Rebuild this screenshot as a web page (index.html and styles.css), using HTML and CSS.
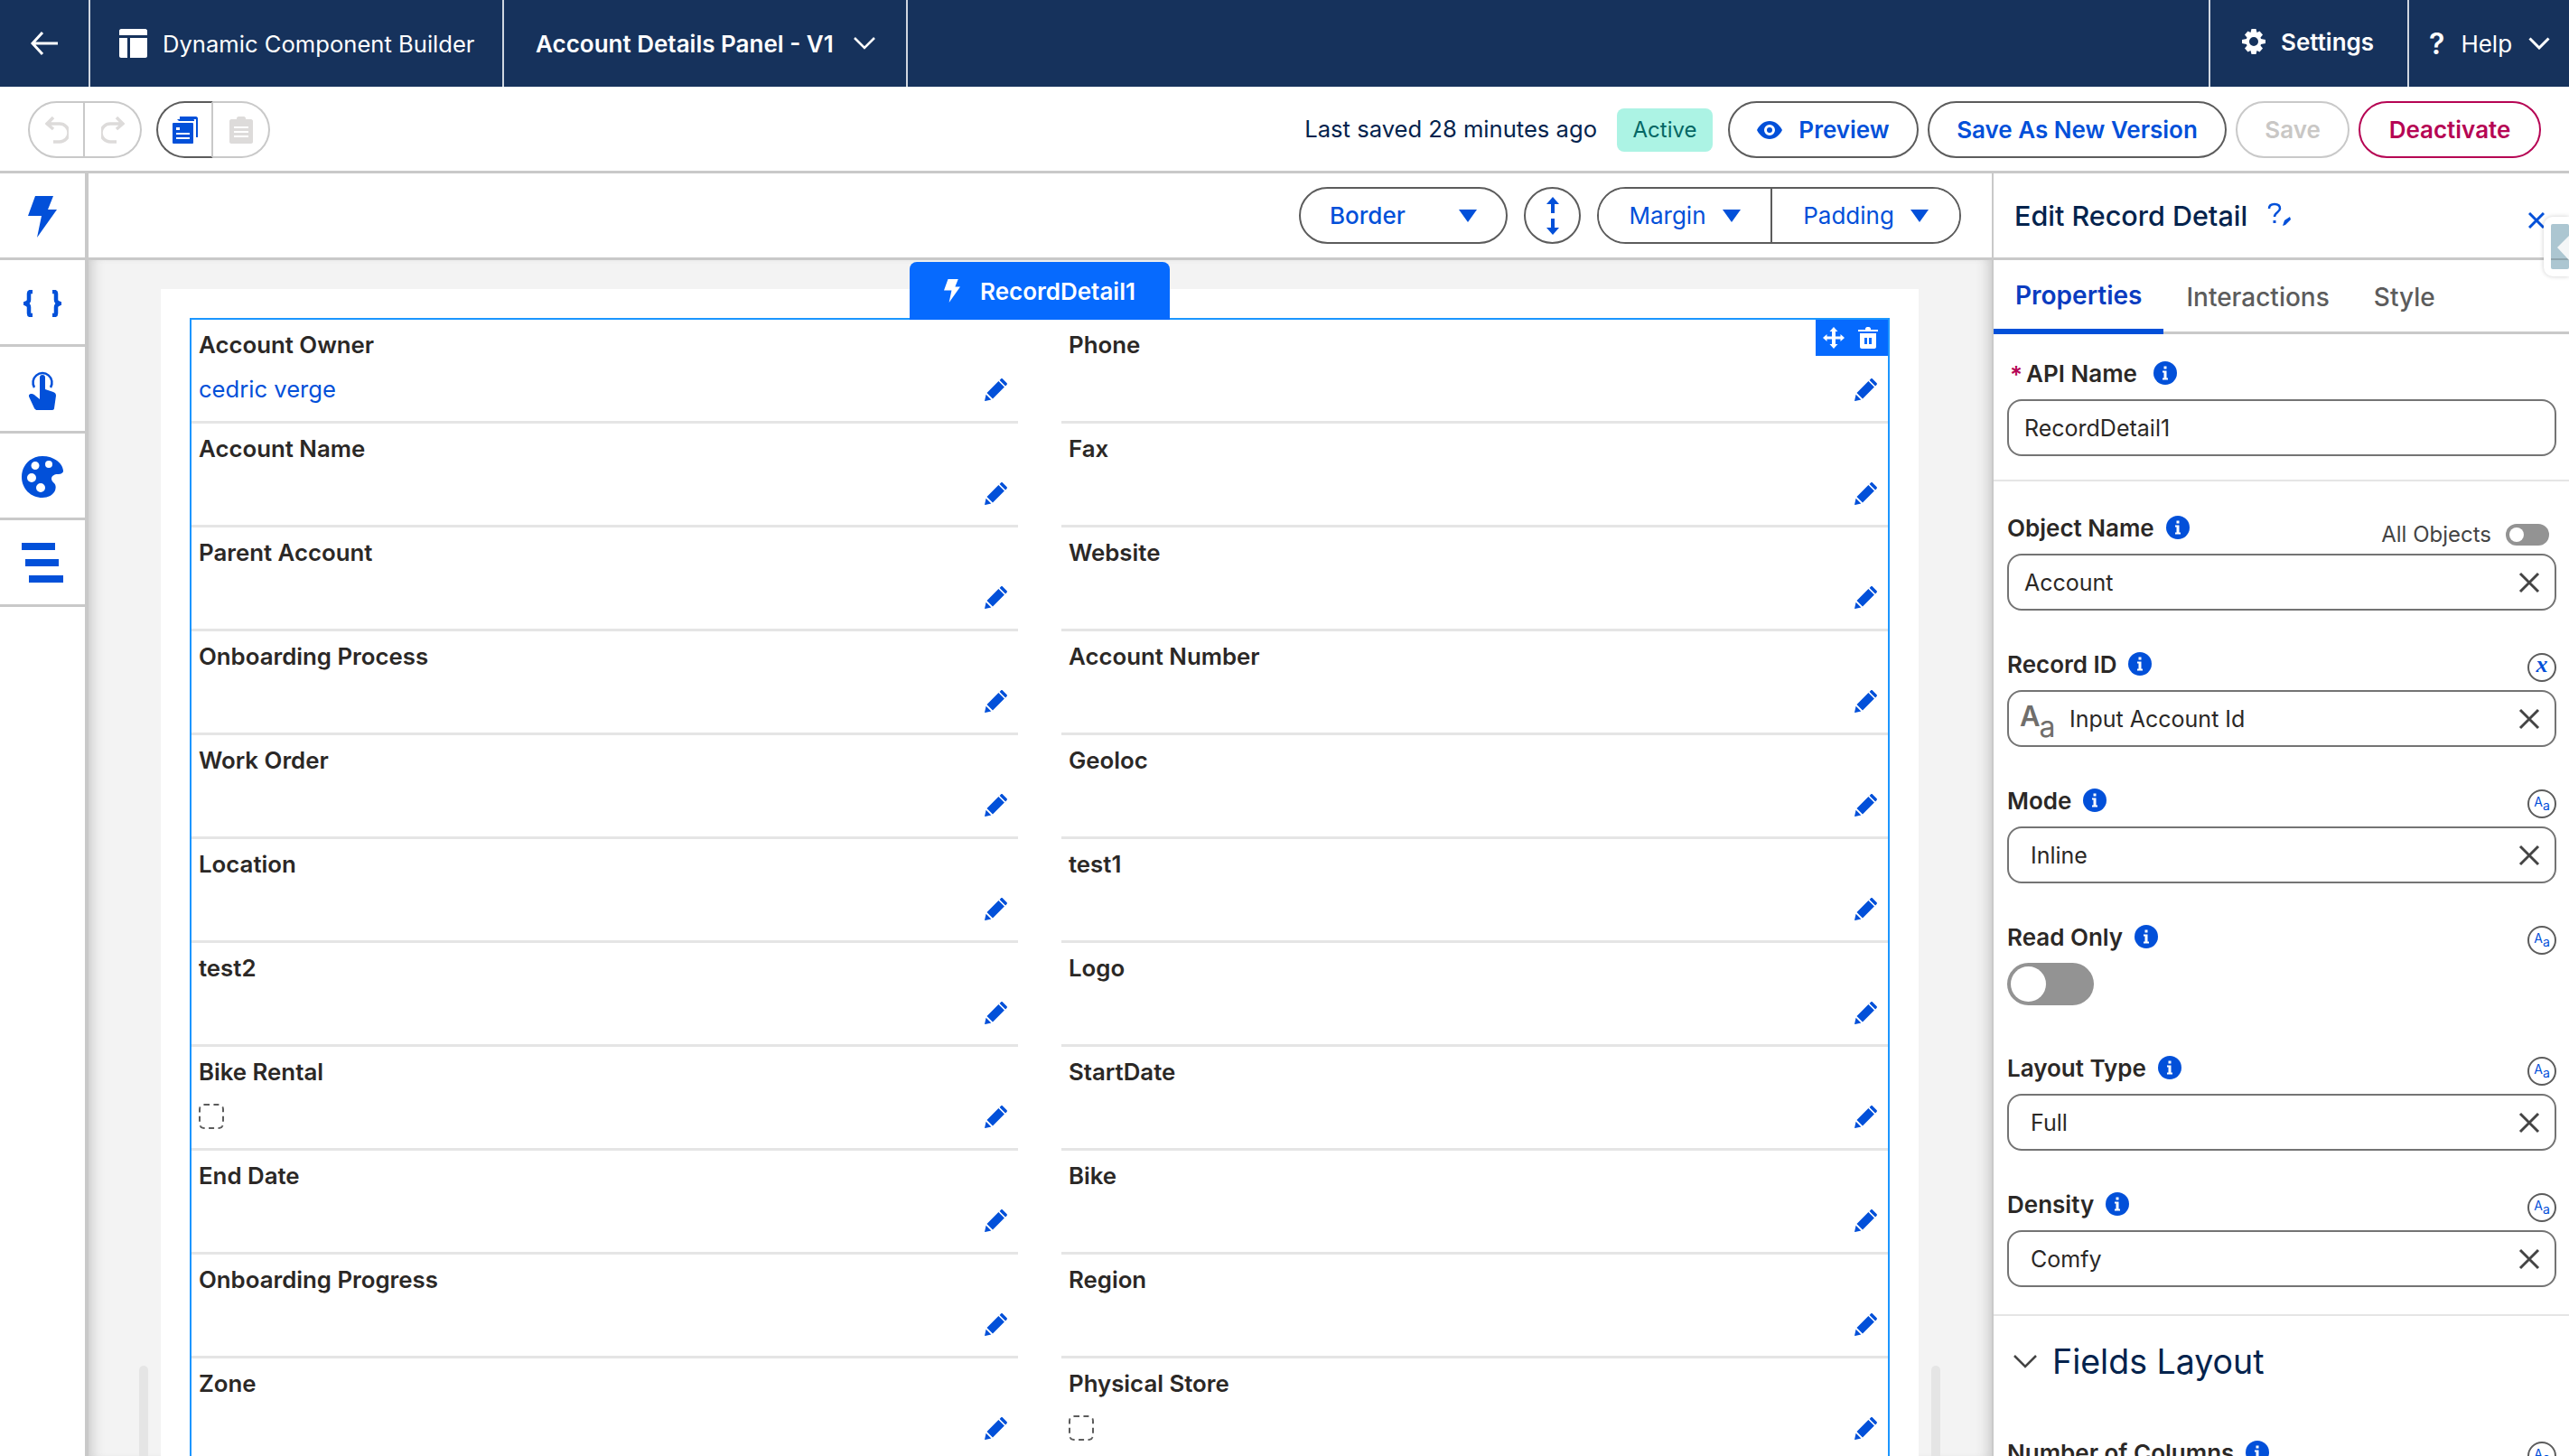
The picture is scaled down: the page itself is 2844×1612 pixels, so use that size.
FILE: index.html
```html
<!DOCTYPE html>
<html lang="en">
<head>
  <meta charset="UTF-8" />
  <title>Dynamic Component Builder</title>
  <link rel="stylesheet" href="styles.css">
</head>
<body>

  <svg class="sprites" width="0" height="0">
    <symbol id="pencil" viewBox="0 0 26 26"><path d="M20 1.5l4.5 4.5c.6.6.6 1.4 0 2l-1.4 1.4-6.5-6.5L18 1.5c.6-.6 1.4-.6 2 0zM15.400 4.100l6.500 6.500L9 23.500 2.500 17zM1.600 18.700l5.700 5.700L.6 25.900c-.3.100-.6-.2-.5-.5z"/></symbol>
    <symbol id="info" viewBox="0 0 26 26"><circle cx="13" cy="13" r="13" fill="#0250d9"/><path fill="#fff" d="M11.500 5.500h3v3h-3zM10 10.500h4.500v8H16v2h-6v-2h1.500v-6H10z"/></symbol>
    <symbol id="clear" viewBox="0 0 24 24"><path d="M2 2l20 20M22 2L2 22" fill="none" stroke="#444" stroke-width="3"/></symbol>
    <symbol id="caret" viewBox="0 0 20 14"><path d="M0 0h20L10 14z"/></symbol>
  </svg>

  <header class="topbar">
    <div class="top-cell back-cell">
      <svg width="32" height="28" viewBox="0 0 32 28"><path d="M14 2L3 14l11 12M3 14h28" fill="none" stroke="#fff" stroke-width="3"/></svg>
    </div>
    <div class="top-cell app-cell">
      <svg width="31" height="32" viewBox="0 0 31 32"><path fill="#fff" d="M2 0h27c1 0 2 1 2 2v5H0V2c0-1 1-2 2-2zM0 10h9v22H2c-1 0-2-1-2-2zM12 10h19v20c0 1-1 2-2 2H12z"/></svg>
      <span>Dynamic Component Builder</span>
    </div>
    <div class="top-cell version-cell">
      <span>Account Details Panel - V1</span>
      <svg width="24" height="14" viewBox="0 0 24 14"><path d="M1 1l11 11L23 1" fill="none" stroke="#fff" stroke-width="2.500"/></svg>
    </div>
    <div class="top-spacer"></div>
    <div class="top-cell settings-cell">
      <svg width="26" height="28" viewBox="0 0 26 28"><path fill-rule="evenodd" fill="#fff" d="M10.500 0h5l1 4 3-1.500L23 6.500l-2.500 3 .5 1.500 5 1v4l-5 1-.5 1.500 2.500 3-3.500 4-3-1.500-1 4h-5l-1-4-3 1.500L3 21.500l2.500-3-.5-1.500-5-1v-4l5-1 .5-1.500-2.500-3 3.500-4 3 1.500zM13 9a5 5 0 100 10 5 5 0 000-10z"/></svg>
      <span>Settings</span>
    </div>
    <div class="top-cell help-cell">
      <span class="help-mark">?</span>
      <span>Help</span>
      <svg width="24" height="14" viewBox="0 0 24 14"><path d="M1.500 1.500L12 12 22.500 1.500" fill="none" stroke="#fff" stroke-width="3"/></svg>
    </div>
  </header>

  <div class="toolbar">
    <div class="btn-group">
      <button class="icon-btn">
        <svg width="26" height="30" viewBox="0 0 26 30"><path d="M9 1L2 8l7 6M3 8h13a8 8 0 010 20H9" fill="none" stroke="#dddbda" stroke-width="3.500"/></svg>
      </button>
      <button class="icon-btn">
        <svg width="26" height="30" viewBox="0 0 26 30"><path d="M17 1l7 7-7 6M23 8H10a8 8 0 000 20h7" fill="none" stroke="#dddbda" stroke-width="3.500"/></svg>
      </button>
    </div>
    <div class="btn-group">
      <button class="icon-btn is-on">
        <svg width="28" height="30" viewBox="0 0 28 30"><path fill="#0250d9" d="M8 0h18c1 0 2 1 2 2v21h-2V3H8z"/><path fill="#0250d9" d="M5 3h18c1 0 1 1 1 1v1H7zM1 7h21c1 0 1 1 1 1v21c0 1-1 1-1 1H1c-1 0-1-1-1-1V8c0-1 1-1 1-1z"/><path fill="#fff" d="M4 12h4v3H4zM4 18h15v2H4zM4 23h15v2H4z"/></svg>
      </button>
      <button class="icon-btn">
        <svg width="28" height="30" viewBox="0 0 28 30"><path fill="#dddbda" d="M9 3V2c0-1 1-2 2-2h6c1 0 2 1 2 2v1h6c1 0 2 1 2 2v23c0 1-1 2-2 2H3c-1 0-2-1-2-2V5c0-1 1-2 2-2z"/><path fill="#fff" d="M6 11h16v2H6zM6 16h16v2H6zM6 21h16v2H6z"/></svg>
      </button>
    </div>
    <div class="toolbar-right">
      <span class="saved">Last saved 28 minutes ago</span>
      <span class="badge">Active</span>
      <button class="pill btn-preview">
        <svg width="28" height="20" viewBox="0 0 28 20"><path fill-rule="evenodd" fill="#0250d9" d="M14 0c6 0 11 4 14 10-3 6-8 10-14 10S3 16 0 10C3 4 8 0 14 0zm0 4a6 6 0 100 12 6 6 0 000-12zm0 3a3 3 0 110 6 3 3 0 010-6z"/></svg>
        Preview
      </button>
      <button class="pill btn-version">Save As New Version</button>
      <button class="pill btn-save">Save</button>
      <button class="pill btn-deactivate">Deactivate</button>
    </div>
  </div>

  <div class="workspace">
    <nav class="rail">
      <div class="rail-item">
        <svg width="32" height="46" viewBox="0 0 32 46"><path fill="#0250d9" d="M8 0h20l-6 15h10L10 46l5-24H0z"/></svg>
      </div>
      <div class="rail-item">
        <svg width="42" height="30" viewBox="0 0 42 30"><path d="M10 2H8c-1.500 0-2 .800-2 2v7c0 2-1 3-4 4 3 1 4 2 4 4v7c0 1.200.5 2 2 2h2M32 2h2c1.500 0 2 .800 2 2v7c0 2 1 3 4 4-3 1-4 2-4 4v7c0 1.200-.5 2-2 2h-2" fill="none" stroke="#0250d9" stroke-width="4.500"/></svg>
      </div>
      <div class="rail-item">
        <svg width="30" height="46" viewBox="0 0 30 46"><path d="M6 20a10.500 10.500 0 1118 0" fill="none" stroke="#0250d9" stroke-width="2.500"/><path fill="#0250d9" d="M12 9c0-2 1-3 3-3s3 1 3 3v13l9 3c2 .7 3 2 3 4l-2 14c0 1-1 2-2 2H9c-1 0-2-.5-3-2L0 30c-.5-1 0-3 3-3 2 0 3 1 4 2l5 4z"/></svg>
      </div>
      <div class="rail-item">
        <svg width="46" height="46" viewBox="0 0 46 46"><path fill-rule="evenodd" fill="#0250d9" d="M23 0c12 0 22 7 23 16 .3 3-3 4-6 4-4 0-7 2-7 5 0 2 1 3 3 5s2 5 1 8c-2 5-8 8-14 8C10 46 0 36 0 23S10 0 23 0zM15 6a4.500 4.500 0 100 9 4.500 4.500 0 000-9zm15-1a4 4 0 100 8 4 4 0 000-8zM11 19a5 5 0 100 10 5 5 0 000-10zm10 11a5 5 0 100 10 5 5 0 000-10z"/></svg>
      </div>
      <div class="rail-item">
        <svg width="46" height="46" viewBox="0 0 46 46"><path fill="#0250d9" d="M0 0h37v8H0zM4 18h37v8H4zM8 36h38v8H8z"/></svg>
      </div>
    </nav>

    <main class="main">
      <div class="subbar">
        <button class="pill sub-pill border-pill">
          <span>Border</span>
          <svg class="caret" width="20" height="14"><use href="#caret"/></svg>
        </button>
        <button class="pill arrows-pill">
          <svg width="16" height="42" viewBox="0 0 16 42"><path fill="#0250d9" d="M8 0l7 8h-5v10H6V8H1zM6 24h4v10h5l-7 8-7-8h5z"/></svg>
        </button>
        <div class="sub-group">
          <button class="sub-part margin-part">
            <span>Margin</span>
            <svg class="caret" width="20" height="14"><use href="#caret"/></svg>
          </button>
          <button class="sub-part">
            <span>Padding</span>
            <svg class="caret" width="20" height="14"><use href="#caret"/></svg>
          </button>
        </div>
      </div>

      <div class="canvas">
        <div class="scroll-thumb thumb-left"></div>
        <div class="scroll-thumb thumb-right"></div>
        <div class="card">
          <div class="selection">
            <div class="sel-tab">
              <svg width="18" height="26" viewBox="0 0 32 46"><path fill="#fff" d="M8 0h20l-6 15h10L10 46l5-24H0z"/></svg>
              RecordDetail1
            </div>
            <div class="sel-tools">
              <svg width="24" height="24" viewBox="0 0 24 24"><path fill="#fff" d="M12 0l4.500 5H14v5.500h5.500V8l4.500 4-4.500 4v-2.500H14V19h2.500L12 24l-4.500-5H10v-5.500H4.500V16L0 12l4.500-4v2.500H10V5H7.500z"/></svg>
              <svg width="22" height="24" viewBox="0 0 22 24"><path fill="#fff" d="M8 2c0-1 1-2 2-2h2c1 0 2 1 2 2v1h8v2H0V3h8zM2 7h18v15c0 1-1 2-2 2H4c-1 0-2-1-2-2zm5 5v7h3v-7zm5 0v7h3v-7z"/></svg>
            </div>
            <div class="record-grid">
              <div class="field-row"><div class="field-label">Account Owner</div><div class="field-body"><a class="field-link">cedric verge</a><svg class="pencil" width="26" height="26"><use href="#pencil"/></svg></div></div>
              <div class="field-row"><div class="field-label">Phone</div><div class="field-body"><svg class="pencil" width="26" height="26"><use href="#pencil"/></svg></div></div>
              <div class="field-row"><div class="field-label">Account Name</div><div class="field-body"><svg class="pencil" width="26" height="26"><use href="#pencil"/></svg></div></div>
              <div class="field-row"><div class="field-label">Fax</div><div class="field-body"><svg class="pencil" width="26" height="26"><use href="#pencil"/></svg></div></div>
              <div class="field-row"><div class="field-label">Parent Account</div><div class="field-body"><svg class="pencil" width="26" height="26"><use href="#pencil"/></svg></div></div>
              <div class="field-row"><div class="field-label">Website</div><div class="field-body"><svg class="pencil" width="26" height="26"><use href="#pencil"/></svg></div></div>
              <div class="field-row"><div class="field-label">Onboarding Process</div><div class="field-body"><svg class="pencil" width="26" height="26"><use href="#pencil"/></svg></div></div>
              <div class="field-row"><div class="field-label">Account Number</div><div class="field-body"><svg class="pencil" width="26" height="26"><use href="#pencil"/></svg></div></div>
              <div class="field-row"><div class="field-label">Work Order</div><div class="field-body"><svg class="pencil" width="26" height="26"><use href="#pencil"/></svg></div></div>
              <div class="field-row"><div class="field-label">Geoloc</div><div class="field-body"><svg class="pencil" width="26" height="26"><use href="#pencil"/></svg></div></div>
              <div class="field-row"><div class="field-label">Location</div><div class="field-body"><svg class="pencil" width="26" height="26"><use href="#pencil"/></svg></div></div>
              <div class="field-row"><div class="field-label">test1</div><div class="field-body"><svg class="pencil" width="26" height="26"><use href="#pencil"/></svg></div></div>
              <div class="field-row"><div class="field-label">test2</div><div class="field-body"><svg class="pencil" width="26" height="26"><use href="#pencil"/></svg></div></div>
              <div class="field-row"><div class="field-label">Logo</div><div class="field-body"><svg class="pencil" width="26" height="26"><use href="#pencil"/></svg></div></div>
              <div class="field-row"><div class="field-label">Bike Rental</div><div class="field-body"><span class="checkbox"></span><svg class="pencil" width="26" height="26"><use href="#pencil"/></svg></div></div>
              <div class="field-row"><div class="field-label">StartDate</div><div class="field-body"><svg class="pencil" width="26" height="26"><use href="#pencil"/></svg></div></div>
              <div class="field-row"><div class="field-label">End Date</div><div class="field-body"><svg class="pencil" width="26" height="26"><use href="#pencil"/></svg></div></div>
              <div class="field-row"><div class="field-label">Bike</div><div class="field-body"><svg class="pencil" width="26" height="26"><use href="#pencil"/></svg></div></div>
              <div class="field-row"><div class="field-label">Onboarding Progress</div><div class="field-body"><svg class="pencil" width="26" height="26"><use href="#pencil"/></svg></div></div>
              <div class="field-row"><div class="field-label">Region</div><div class="field-body"><svg class="pencil" width="26" height="26"><use href="#pencil"/></svg></div></div>
              <div class="field-row"><div class="field-label">Zone</div><div class="field-body"><svg class="pencil" width="26" height="26"><use href="#pencil"/></svg></div></div>
              <div class="field-row"><div class="field-label">Physical Store</div><div class="field-body"><span class="checkbox"></span><svg class="pencil" width="26" height="26"><use href="#pencil"/></svg></div></div>
            </div>
          </div>
        </div>
      </div>
    </main>

    <aside class="panel">
      <div class="panel-head">
        <h2>Edit Record Detail</h2>
        <svg class="panel-help" width="28" height="30" viewBox="0 0 28 30"><path d="M2 7c0-3 2-5 6-5s6 2 6 5c0 4-6 4-6 9" fill="none" stroke="#0250d9" stroke-width="2.500"/><path fill="#0250d9" d="M6.500 20h3v3h-3zM19 20l6-4 1 3-6 6-3 1z"/></svg>
        <svg class="panel-close" width="18" height="18" viewBox="0 0 18 18"><path d="M1 1l16 16M17 1L1 17" fill="none" stroke="#0250d9" stroke-width="3"/></svg>
        <div class="panel-handle">
          <svg width="20" height="50" viewBox="0 0 20 50"><rect width="20" height="50" rx="2" fill="#acc6d1"/><path d="M0 39h20" stroke="#8fa5ae" stroke-width="2"/><path d="M7 26l13-13v27z" fill="#f4f6f7"/></svg>
        </div>
      </div>
      <div class="tabs">
        <div class="tab is-active">Properties</div>
        <div class="tab">Interactions</div>
        <div class="tab">Style</div>
      </div>

      <div class="panel-section api-section">
        <div class="form-field">
          <div class="form-label api-label"><abbr>*</abbr><span>API Name</span><svg class="info" width="26" height="26"><use href="#info"/></svg></div>
          <div class="input"><span class="input-text">RecordDetail1</span></div>
        </div>
      </div>

      <div class="panel-section props-section">
        <div class="form-field">
          <div class="form-label"><span>Object Name</span><svg class="info" width="26" height="26"><use href="#info"/></svg>
            <div class="label-end">
              <span class="all-objects">All Objects</span>
              <span class="mini-toggle"></span>
            </div>
          </div>
          <div class="input"><span class="input-text">Account</span><svg class="clear" width="24" height="24"><use href="#clear"/></svg></div>
        </div>
        <div class="form-field">
          <div class="form-label"><span>Record ID</span><svg class="info" width="26" height="26"><use href="#info"/></svg>
            <div class="label-end"><span class="type-btn type-x">x</span></div>
          </div>
          <div class="input"><span class="input-type"><b>A</b><i>a</i></span><span class="input-text">Input Account Id</span><svg class="clear" width="24" height="24"><use href="#clear"/></svg></div>
        </div>
        <div class="form-field">
          <div class="form-label"><span>Mode</span><svg class="info" width="26" height="26"><use href="#info"/></svg>
            <div class="label-end"><span class="type-btn"><b>A</b><i>a</i></span></div>
          </div>
          <div class="input is-pick"><span class="input-text">Inline</span><svg class="clear" width="24" height="24"><use href="#clear"/></svg></div>
        </div>
        <div class="form-field toggle-field">
          <div class="form-label"><span>Read Only</span><svg class="info" width="26" height="26"><use href="#info"/></svg>
            <div class="label-end"><span class="type-btn"><b>A</b><i>a</i></span></div>
          </div>
          <span class="toggle"></span>
        </div>
        <div class="form-field">
          <div class="form-label"><span>Layout Type</span><svg class="info" width="26" height="26"><use href="#info"/></svg>
            <div class="label-end"><span class="type-btn"><b>A</b><i>a</i></span></div>
          </div>
          <div class="input is-pick"><span class="input-text">Full</span><svg class="clear" width="24" height="24"><use href="#clear"/></svg></div>
        </div>
        <div class="form-field">
          <div class="form-label"><span>Density</span><svg class="info" width="26" height="26"><use href="#info"/></svg>
            <div class="label-end"><span class="type-btn"><b>A</b><i>a</i></span></div>
          </div>
          <div class="input is-pick"><span class="input-text">Comfy</span><svg class="clear" width="24" height="24"><use href="#clear"/></svg></div>
        </div>
      </div>

      <div class="panel-section layout-section">
        <div class="section-title">
          <svg width="28" height="16" viewBox="0 0 28 16"><path d="M2 2l12 12L26 2" fill="none" stroke="#444" stroke-width="2.500"/></svg>
          <span>Fields Layout</span>
        </div>
        <div class="form-field">
          <div class="form-label"><span>Number of Columns</span><svg class="info" width="26" height="26"><use href="#info"/></svg>
            <div class="label-end"><span class="type-btn"><b>A</b><i>a</i></span></div>
          </div>
        </div>
      </div>
    </aside>
  </div>

</body>
</html>
```

FILE: styles.css
```css
* {
  margin: 0;
  padding: 0;
  box-sizing: border-box;
}

html, body {
  height: 100%;
  font-family: Inter, 'Noto Sans', sans-serif;
  font-size: 25px;
  color: #2b2826;
  background: #fff;
  overflow: hidden;
}

button {
  font-family: inherit;
  background: #fff;
  cursor: pointer;
}

svg {
  display: block;
  flex-shrink: 0;
}

.sprites {
  position: absolute;
}

/* top navy bar */
.topbar {
  height: 96px;
  background: #16325c;
  color: #fff;
  display: flex;
}

.top-cell {
  display: flex;
  align-items: center;
  border-right: 2px solid #cfd6e0;
}

.back-cell {
  width: 100px;
  justify-content: center;
}

.app-cell {
  width: 458px;
  padding-left: 32px;
  gap: 17px;
  font-size: 25.6px;
}

.version-cell {
  width: 447px;
  padding-left: 35px;
  gap: 22px;
  font-size: 26px;
  font-weight: 600;
}

.top-spacer {
  flex: 1;
  border-right: 2px solid #cfd6e0;
}

.settings-cell {
  width: 220px;
  padding: 0 0 4px 35px;
  gap: 17px;
  font-weight: 600;
  font-size: 26px;
}

.help-cell {
  width: 177px;
  border-right: none;
  padding-left: 22px;
  gap: 18px;
  font-size: 26px;
}

.help-mark {
  font-size: 32px;
  font-weight: 600;
}

/* save toolbar */
.toolbar {
  height: 96px;
  padding: 16px 31px 0;
  display: flex;
  align-items: flex-start;
  gap: 16px;
  border-bottom: 3px solid #c9c9c9;
}

.btn-group {
  display: flex;
  height: 63px;
}

.icon-btn {
  width: 63px;
  border: 2px solid #c9c9c9;
  display: flex;
  align-items: center;
  justify-content: center;
}

.icon-btn:first-child {
  border-radius: 32px 0 0 32px;
}

.icon-btn:last-child {
  border-radius: 0 32px 32px 0;
  border-left: none;
}

.icon-btn.is-on {
  border-color: #5c5c5c;
  border-right: 2px solid #c9c9c9;
}

.toolbar-right {
  margin-left: auto;
  display: flex;
  align-items: center;
  gap: 10px;
  height: 63px;
}

.saved {
  font-size: 25.6px;
  color: #03234d;
  margin-right: 12px;
  padding-bottom: 3px;
}

.badge {
  width: 106px;
  height: 48px;
  margin-right: 7px;
  background: #acf3e4;
  color: #056764;
  font-size: 24px;
  border-radius: 8px;
  display: flex;
  align-items: center;
  justify-content: center;
}

.pill {
  height: 63px;
  border: 2px solid #5c5c5c;
  border-radius: 32px;
  color: #0250d9;
  font-size: 26px;
  font-weight: 600;
  display: flex;
  align-items: center;
  justify-content: center;
}

.btn-preview {
  width: 211px;
  gap: 18px;
}

.btn-version {
  width: 331px;
}

.btn-save {
  width: 126px;
  border-color: #c9c9c9;
  color: #c9c7c5;
}

.btn-deactivate {
  width: 202px;
  border-color: #b60554;
  color: #b60554;
}

/* three main columns */
.workspace {
  height: 1420px;
  display: flex;
}

.rail {
  width: 98px;
  border-right: 4px solid #c9c9c9;
  flex-shrink: 0;
}

.rail-item {
  height: 96px;
  padding-top: 2px;
  border-bottom: 3px solid #c9c9c9;
  display: flex;
  align-items: center;
  justify-content: center;
}

.main {
  flex: 1;
  min-width: 0;
}

.subbar {
  height: 96px;
  padding-top: 15px;
  padding-right: 34px;
  display: flex;
  align-items: flex-start;
  justify-content: flex-end;
  gap: 18px;
  border-bottom: 3px solid #c9c9c9;
}

.sub-pill {
  font-weight: 500;
}

.border-pill {
  width: 231px;
  justify-content: space-between;
  padding: 0 32px;
}

.arrows-pill {
  width: 63px;
}

.caret {
  fill: #0250d9;
}

.sub-group {
  display: flex;
  height: 63px;
  border: 2px solid #5c5c5c;
  border-radius: 32px;
  overflow: hidden;
}

.sub-part {
  width: 207px;
  border: none;
  color: #0250d9;
  font-size: 26px;
  display: flex;
  align-items: center;
  justify-content: center;
  gap: 18px;
}

.margin-part {
  width: 192px;
  border-right: 2px solid #5c5c5c;
}

/* canvas with the record form */
.canvas {
  position: relative;
  height: 1325px;
  background: #f3f3f3;
  padding: 32px 81px 0 80px;
  box-shadow: inset 14px 0 14px -10px #c9c9c9, inset -14px 0 14px -10px #c9c9c9;
  overflow: hidden;
}

.scroll-thumb {
  position: absolute;
  top: 1224px;
  width: 10px;
  height: 120px;
  background: #e5e5e5;
  border-radius: 5px;
}

.thumb-left {
  left: 56px;
}

.thumb-right {
  left: 2040px;
}

.card {
  background: #fff;
  padding: 32px 32px 0;
  height: 1400px;
}

.selection {
  position: relative;
  border: 2px solid #1b96ff;
}

.sel-tab {
  position: absolute;
  top: -64px;
  left: 50%;
  transform: translateX(-50%);
  width: 288px;
  height: 64px;
  background: #066afe;
  color: #fff;
  font-size: 26px;
  font-weight: 600;
  border-radius: 8px 8px 0 0;
  display: flex;
  align-items: center;
  justify-content: center;
  gap: 22px;
}

.sel-tools {
  position: absolute;
  top: 0;
  right: 0;
  width: 80px;
  height: 40px;
  background: #066afe;
  display: flex;
  align-items: center;
  justify-content: space-around;
  padding: 0 4px 0 1px;
}

.record-grid {
  display: grid;
  grid-template-columns: 915px 915px;
  column-gap: 48px;
}

.field-row {
  height: 115px;
  padding: 11px 11px 0 8px;
  border-bottom: 3px solid #e5e5e5;
  display: flex;
  flex-direction: column;
}

.field-label {
  height: 34px;
  line-height: 34px;
  font-size: 25.8px;
  font-weight: 600;
}

.field-body {
  flex: 1;
  display: flex;
  align-items: center;
  justify-content: space-between;
  padding-bottom: 4px;
}

.field-link {
  color: #0250d9;
  font-size: 25.6px;
}

.pencil {
  margin-left: auto;
  fill: #0250d9;
}

.checkbox {
  width: 28px;
  height: 28px;
  border: 2px dashed #5c5c5c;
  border-radius: 6px;
}

/* right properties panel */
.panel {
  width: 639px;
  flex-shrink: 0;
  position: relative;
  background: #fff;
  border-left: 2px solid #c9c9c9;
  overflow: hidden;
}

.panel-head {
  position: relative;
  height: 96px;
  padding-left: 23px;
  display: flex;
  align-items: center;
  gap: 22px;
  border-bottom: 3px solid #c9c9c9;
}

.panel-head h2 {
  font-size: 30.500px;
  font-weight: 500;
  color: #03234d;
}

.panel-close {
  position: absolute;
  right: 27px;
  top: 43px;
}

.panel-handle {
  position: absolute;
  right: 0;
  top: 48px;
  padding: 8px 0 8px 8px;
  background: #fff;
  border-radius: 10px 0 0 10px;
  box-shadow: 0 0 5px rgba(0, 0, 0, 0.2);
}

.tabs {
  height: 82px;
  display: flex;
  padding-top: 2px;
  border-bottom: 3px solid #c9c9c9;
}

.tab {
  padding: 0 24px;
  margin-right: 1px;
  display: flex;
  align-items: center;
  font-size: 28px;
  font-weight: 500;
  color: #5c5c5c;
}

.tab.is-active {
  color: #0b3cc0;
  font-weight: 600;
  border-bottom: 6px solid #0250d9;
  margin-bottom: -3px;
}

.panel-section {
  padding: 0 14px 0 15px;
  border-bottom: 2px solid #e5e5e5;
}

.api-section {
  padding-top: 28px;
  padding-bottom: 26px;
}

.props-section {
  padding-top: 36px;
  padding-bottom: 30px;
}

.layout-section {
  border-bottom: none;
  padding-top: 28px;
}

.form-field + .form-field {
  margin-top: 44px;
}

.toggle-field {
  margin-bottom: 54px;
}

.toggle-field + .form-field {
  margin-top: 0;
}

.form-label {
  height: 34px;
  margin-bottom: 10px;
  display: flex;
  align-items: center;
  gap: 13px;
  font-size: 26px;
  font-weight: 600;
  line-height: 32px;
  white-space: nowrap;
}

.form-label > span {
  padding-bottom: 3px;
}

.form-label .info {
  margin-top: -4px;
}

.api-label {
  padding-left: 3px;
}

.api-label abbr {
  color: #b60554;
  margin-right: -9px;
}

.api-label .info {
  margin-left: 5px;
}

.label-end {
  margin-left: auto;
  display: flex;
  align-items: center;
  gap: 16px;
}

.all-objects {
  font-size: 24px;
  font-weight: 400;
  color: #444;
  padding-top: 12px;
}

.mini-toggle {
  position: relative;
  width: 48px;
  height: 24px;
  margin-right: 8px;
  margin-top: 12px;
  background: #939393;
  border-radius: 12px;
}

.mini-toggle::before {
  content: "";
  position: absolute;
  left: 4px;
  top: 4px;
  width: 16px;
  height: 16px;
  background: #fff;
  border-radius: 50%;
}

.input {
  height: 63px;
  border: 2px solid #747474;
  border-radius: 16px;
  padding: 0 17px;
  display: flex;
  align-items: center;
  font-size: 25px;
  color: #2b2826;
}

.input.is-pick {
  padding-left: 24px;
}

.clear {
  margin-left: auto;
  margin-right: -1px;
}

.input-type {
  width: 55px;
  height: 40px;
  margin-left: -5px;
  color: #706e6b;
  display: flex;
  align-items: flex-start;
  line-height: 1;
}

.input-type b {
  font-size: 31px;
  font-weight: 600;
  margin-top: 1px;
}

.input-type i {
  font-size: 32px;
  font-style: normal;
  margin-top: 13px;
  margin-left: -1px;
}

.type-btn {
  width: 32px;
  height: 32px;
  margin-top: 4px;
  border: 2px solid #5c5c5c;
  border-radius: 50%;
  color: #0250d9;
  display: flex;
  align-items: center;
  justify-content: center;
  font-weight: 400;
  line-height: 1;
}

.type-btn b {
  font-size: 14px;
  font-weight: 400;
  margin-top: -5px;
}

.type-btn i {
  font-size: 14px;
  font-style: normal;
  margin-top: 3px;
}

.type-x {
  font-family: 'Liberation Serif', serif;
  font-style: italic;
  font-weight: 700;
  font-size: 26px;
  padding-bottom: 6px;
}

.toggle {
  position: relative;
  display: block;
  width: 96px;
  height: 47px;
  background: #939393;
  border-radius: 24px;
}

.toggle::before {
  content: "";
  position: absolute;
  left: 4px;
  top: 4px;
  width: 39px;
  height: 39px;
  background: #fff;
  border-radius: 50%;
}

.section-title {
  display: flex;
  align-items: center;
  gap: 16px;
  padding-left: 6px;
  font-size: 37.500px;
  color: #03234d;
  height: 44px;
  margin-bottom: 64px;
}
```
